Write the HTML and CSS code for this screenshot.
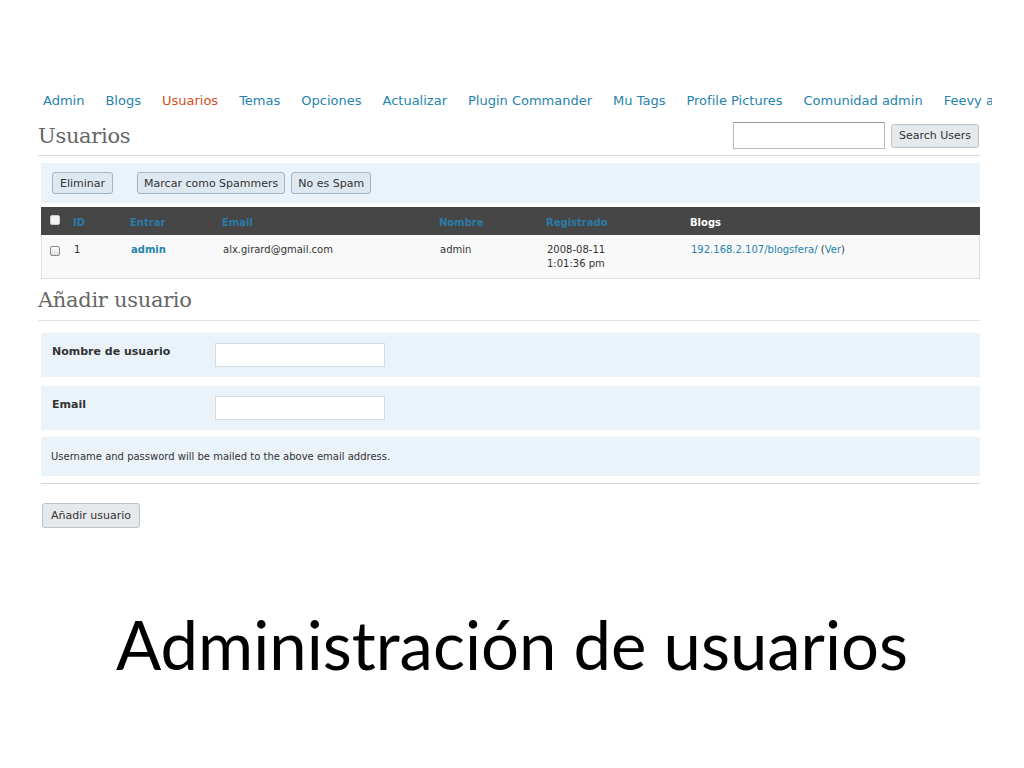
FILE: index.html
```html
<!DOCTYPE html>
<html lang="es">
<head>
<meta charset="utf-8">
<title>Administración de usuarios</title>
<link rel="stylesheet" href="styles.css">
</head>
<body>
<div class="shot">
  <nav class="nav">
    <a>Admin</a><a>Blogs</a><a class="current">Usuarios</a><a>Temas</a><a>Opciones</a><a>Actualizar</a><a>Plugin Commander</a><a>Mu Tags</a><a>Profile Pictures</a><a>Comunidad admin</a><a>Feevy admin</a>
  </nav>
  <div class="page">
    <div class="head">
      <h2 class="title">Usuarios</h2>
      <div class="search">
        <span class="search-input"></span>
        <span class="btn btn-gray">Search Users</span>
      </div>
    </div>
    <div class="actions">
      <span class="btn btn-blue">Eliminar</span>
      <span class="btn btn-blue spaced narrow">Marcar como Spammers</span>
      <span class="btn btn-blue narrow">No es Spam</span>
    </div>
    <div class="table">
      <div class="trow thead">
        <div class="c"><span class="cb cb-head"></span></div>
        <div class="c link">ID</div>
        <div class="c link">Entrar</div>
        <div class="c link">Email</div>
        <div class="c link">Nombre</div>
        <div class="c link">Registrado</div>
        <div class="c white">Blogs</div>
      </div>
      <div class="trow tbody">
        <div class="c"><span class="cb"></span></div>
        <div class="c">1</div>
        <div class="c strong">admin</div>
        <div class="c">alx.girard@gmail.com</div>
        <div class="c">admin</div>
        <div class="c">2008-08-11<br>1:01:36 pm</div>
        <div class="c"><span class="blue">192.168.2.107/blogsfera/</span> (<span class="blue">Ver</span>)</div>
      </div>
    </div>
    <h2 class="title sub">Añadir usuario</h2>
    <div class="form">
      <div class="frow"><label>Nombre de usuario</label><span class="finput"></span></div>
      <div class="frow"><label>Email</label><span class="finput"></span></div>
      <div class="frow note">Username and password will be mailed to the above email address.</div>
    </div>
    <div class="submit"><span class="btn btn-gray add">Añadir usuario</span></div>
  </div>
  <h1 class="slide-title">Administración de usuarios</h1>
</div>
</body>
</html>
```
FILE: styles.css
```css
html, body { margin: 0; padding: 0; background: #fff; }
body { font-family: "DejaVu Sans", Verdana, sans-serif; color: #333; }
.shot { width: 1024px; height: 768px; overflow: hidden; }

.nav {
  display: flex; gap: 21px; white-space: nowrap; overflow: hidden;
  margin: 91px 0 0 43px; width: 949px; height: 20px; line-height: 20px;
  font-size: 13px;
}
.nav a { color: #2583ad; flex: none; }
.nav a.current { color: #d54e21; }

.page { margin-left: 38px; width: 942px; }

.head {
  display: flex; justify-content: space-between; align-items: center;
  margin-top: 9px; height: 31px; padding-bottom: 4px;
  border-bottom: 1px solid #dadada;
}
.title {
  margin: 0; font-family: "DejaVu Serif", Georgia, serif; font-weight: normal;
  font-size: 21px; color: #666; letter-spacing: -0.3px;
}
.search { display: flex; align-items: center; gap: 6px; margin-right: 1px; }
.search-input {
  display: block; width: 150px; height: 25px; background: #fff;
  border: 1px solid #bbb; border-top-color: #999;
}
.btn {
  display: inline-flex; align-items: center; box-sizing: border-box;
  height: 22px; padding: 0 7px; font-size: 11px; color: #333;
  border-radius: 3px; white-space: nowrap;
}
.btn-gray { background: #e5e9ec; border: 1px solid #b9c3cb; height: 24px; padding: 0 7px; }
.btn-blue { background: #dde8f1; border: 1px solid #9fb4c4; }
.btn.narrow { padding: 0 6px; }

.actions {
  display: flex; align-items: center; gap: 6px;
  margin: 7px 0 0 3px; height: 40px; padding-left: 11px; background: #eaf2fa;
}
.actions .spaced { margin-left: 18px; }

.table { margin: 4px 0 0 3px; }
.trow {
  display: grid; grid-template-columns: 27px 57px 92px 217px 107px 144px 1fr;
  font-size: 10px;
}
.c { padding-left: 5px; }
.c:first-child { padding-left: 9px; }
.thead { background: #464646; height: 28px; align-items: center; font-weight: bold; padding-top: 2px; box-sizing: border-box; }
.thead .link { color: #2a7ba8; }
.thead .white { color: #fff; }
.tbody {
  background: #f9f9f9; height: 44px; box-sizing: border-box; padding-top: 8px;
  border: 1px solid #dfdfdf; border-top: none; line-height: 14px; color: #333;
}
.tbody .c:first-child { padding-left: 8px; }
.strong { font-weight: bold; color: #2583ad; }
.blue { color: #2583ad; }
.cb {
  display: block; width: 10px; height: 10px; box-sizing: border-box;
  border: 1px solid #888; border-radius: 2px;
  background: linear-gradient(#fff, #ddd);
  margin-top: 3px;
}
.cb-head { background: #f3f3f3; border-color: #ccc; margin-top: -5px; }

.sub { margin-top: 8px; height: 33px; line-height: 26px; border-bottom: 1px solid #e3e3e3; }

.form { margin: 12px 0 0 3px; display: flex; flex-direction: column; }
.frow {
  display: flex; align-items: flex-start; background: #eaf2fa;
  height: 44px; box-sizing: border-box; padding: 10px 0 0 11px;
}
.frow + .frow { margin-top: 9px; }
.frow label {
  width: 163px; font-weight: bold; font-size: 11px; color: #333;
  line-height: 16px; padding-top: 1px;
}
.finput {
  display: block; width: 170px; height: 24px; box-sizing: border-box;
  background: #fff; border: 1px solid #d4dbe2;
}
.frow.note {
  margin-top: 7px; height: 39px; padding: 0 0 0 10px; align-items: center;
  font-size: 10px; color: #333;
}
.submit {
  margin: 7px 0 0 3px; border-top: 1px solid #d5d5d5; padding-top: 19px;
}
.add { margin-left: 1px; height: 25px; padding: 0 8px; font-size: 11px; }

.slide-title {
  margin: 76px 0 0 0; text-align: center; font-family: "Lato", "Open Sans", sans-serif;
  font-weight: normal; font-size: 67px; color: #000; line-height: 80px;
}
```
